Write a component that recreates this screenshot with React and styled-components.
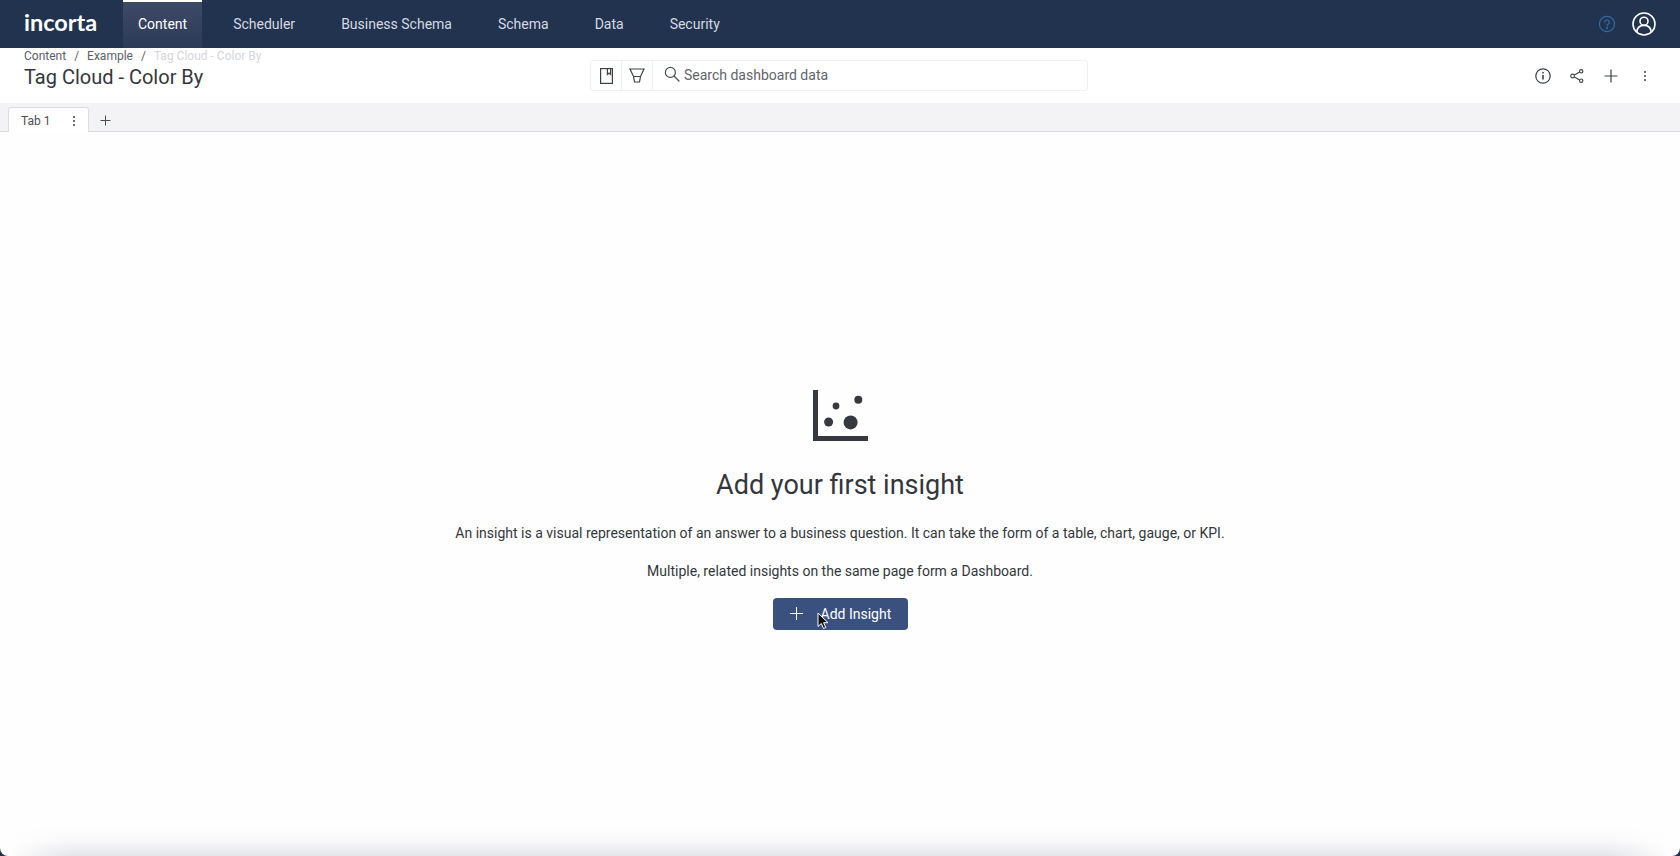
import styled, { createGlobalStyle } from 'styled-components';

const GlobalStyle = createGlobalStyle`
  html, body {
    margin: 0;
    padding: 0;
    background: #ffffff;
    font-family: Roboto, "Liberation Sans", sans-serif;
    overflow: hidden;
  }
`;

const NAV_ITEMS = ['Content', 'Scheduler', 'Business Schema', 'Schema', 'Data', 'Security'];

function App() {
  return (
    <>
      <GlobalStyle />
      <Page>
        <Nav>
          <Logo>incorta</Logo>
          <NavList>
            {NAV_ITEMS.map((item, i) => (
              <NavItem key={item} $active={i === 0}>
                {item}
              </NavItem>
            ))}
          </NavList>
          <NavRight>
            <svg width="18" height="18" viewBox="0 0 18 18" fill="none" stroke="#2f6c9f" strokeWidth="1.2">
              <circle cx="9" cy="9" r="7.6" />
              <path d="M6.7 7.2a2.3 2.3 0 1 1 3.6 1.9c-.8.5-1.3 1-1.3 2" strokeLinecap="round" />
              <circle cx="9" cy="13.1" r=".5" fill="#2f6c9f" />
            </svg>
            <svg width="24" height="24" viewBox="0 0 24 24" fill="none" stroke="#fff" strokeWidth="1.6">
              <circle cx="12" cy="12" r="11" />
              <circle cx="12" cy="9.2" r="4" />
              <path d="M4.8 20c.4-4 3-6.6 7.2-6.6s6.8 2.6 7.2 6.6" />
            </svg>
          </NavRight>
        </Nav>

        <Header>
          <TitleBlock>
            <Breadcrumb>
              <span>Content</span>
              <Sep>/</Sep>
              <span>Example</span>
              <Sep>/</Sep>
              <Current>Tag Cloud - Color By</Current>
            </Breadcrumb>
            <Title>Tag Cloud - Color By</Title>
          </TitleBlock>

          <SearchGroup>
            <SearchButton>
              <svg width="13" height="16" viewBox="0 0 13 16" fill="none" stroke="#3d4249" strokeWidth="1.2">
                <rect x=".6" y=".6" width="11.8" height="14.8" />
                <path d="M7.4 1v5.4l1.6-1.3 1.6 1.3V1" />
              </svg>
            </SearchButton>
            <SearchButton>
              <svg width="16" height="15" viewBox="0 0 16 15" fill="none" stroke="#3d4249" strokeWidth="1.2">
                <path d="M1 1h14l-3.5 7.5h-7z" />
                <path d="M4.5 8.5l1 5.5h5l1-5.5" />
              </svg>
            </SearchButton>
            <SearchField>
              <svg width="16" height="16" viewBox="0 0 16 16" fill="none" stroke="#4a4f57" strokeWidth="1.2">
                <circle cx="6.4" cy="6.4" r="5" />
                <path d="M10 10l5 5" strokeLinecap="round" />
              </svg>
              <span>Search dashboard data</span>
            </SearchField>
          </SearchGroup>

          <Actions>
            <ActionIcon>
              <svg width="16" height="16" viewBox="0 0 16 16" fill="none" stroke="#3d4249" strokeWidth="1.2">
                <circle cx="8" cy="8" r="7.2" />
                <path d="M8 7v4.6" strokeWidth="1.6" />
                <circle cx="8" cy="4.7" r=".9" fill="#3d4249" stroke="none" />
              </svg>
            </ActionIcon>
            <ActionIcon>
              <svg width="14" height="14" viewBox="0 0 14 14" fill="none" stroke="#3d4249" strokeWidth="1.1">
                <circle cx="2.6" cy="7" r="1.9" />
                <circle cx="11.2" cy="2.3" r="1.7" />
                <circle cx="11.2" cy="11.7" r="1.7" />
                <path d="M4.3 6.1l5.4-3M4.3 7.9l5.4 3" />
              </svg>
            </ActionIcon>
            <ActionIcon>
              <svg width="14" height="14" viewBox="0 0 14 14" stroke="#3d4249" strokeWidth="1.2">
                <path d="M7 .5v13M.5 7h13" />
              </svg>
            </ActionIcon>
            <ActionIcon>
              <Dots />
            </ActionIcon>
          </Actions>
        </Header>

        <TabBar>
          <Tab>
            <TabLabel>Tab 1</TabLabel>
            <Dots />
          </Tab>
          <AddTab>
            <svg width="11" height="11" viewBox="0 0 11 11" stroke="#4a4f57" strokeWidth="1">
              <path d="M5.5 .5v10M.5 5.5h10" />
            </svg>
          </AddTab>
        </TabBar>

        <Main>
          <svg width="55" height="51" viewBox="0 0 55 51" fill="#36393f">
            <rect x="0" y="0" width="5" height="51" />
            <rect x="0" y="46" width="55" height="5" />
            <circle cx="15.6" cy="32" r="4.5" />
            <circle cx="23" cy="16" r="3.4" />
            <circle cx="37.6" cy="32.4" r="7" />
            <circle cx="45.3" cy="9.7" r="4" />
          </svg>
          <Heading>Add your first insight</Heading>
          <Text>
            An insight is a visual representation of an answer to a business question. It can take the form of a table, chart, gauge, or KPI.
          </Text>
          <Text>Multiple, related insights on the same page form a Dashboard.</Text>
          <AddButton>
            <svg width="13" height="13" viewBox="0 0 13 13" stroke="#fff" strokeWidth="1">
              <path d="M6.5 0v13M0 6.5h13" />
            </svg>
            <span>Add Insight</span>
            <Cursor width="13" height="18" viewBox="0 0 13 18">
              <path d="M1 1v13.5l3.3-3 2.2 5 2.3-1-2.2-4.8h4.4z" fill="#111" stroke="#fff" strokeWidth="1" />
            </Cursor>
          </AddButton>
        </Main>
        <WindowEdge />
      </Page>
    </>
  );
}
export default App;

const Page = styled.div`
  width: 1680px;
  height: 856px;
  display: flex;
  flex-direction: column;
  position: relative;
  overflow: hidden;
  background: #fff;
`;

const Nav = styled.header`
  height: 48px;
  flex-shrink: 0;
  display: flex;
  align-items: stretch;
  background: #223350;
  padding: 0 24px 0 24px;
`;

const Logo = styled.div`
  width: 99px;
  align-self: center;
  font-family: Lato, sans-serif;
  font-size: 23.5px;
  font-weight: 700;
  color: #fff;
  line-height: 1;
  margin-top: -3px;
`;

const NavList = styled.nav`
  display: flex;
  gap: 16px;
`;

const NavItem = styled.div`
  display: flex;
  align-items: center;
  padding: 0 15px 3px;
  font-size: 14px;
  color: ${({ $active }) => ($active ? '#ffffff' : '#d5d9e0')};
  background: ${({ $active }) => ($active ? 'linear-gradient(#3d4a66, #2c3b58)' : 'transparent')};
  border-top: 2px solid ${({ $active }) => ($active ? '#ffffff' : 'transparent')};
`;

const NavRight = styled.div`
  margin-left: auto;
  display: flex;
  align-items: center;
  gap: 16px;
`;

const Header = styled.div`
  height: 55px;
  flex-shrink: 0;
  display: grid;
  grid-template-columns: 566px 498px 1fr;
  padding-left: 24px;
  background: #fff;
`;

const TitleBlock = styled.div`
  display: flex;
  flex-direction: column;
`;

const Breadcrumb = styled.div`
  display: flex;
  gap: 8px;
  font-size: 12px;
  line-height: 15px;
  margin-top: 1px;
  color: #5c6169;
`;

const Sep = styled.span`
  color: #5c6169;
`;

const Current = styled.span`
  color: #d3d6dc;
`;

const Title = styled.h1`
  margin: 0;
  font-size: 20px;
  font-weight: 400;
  line-height: 26px;
  color: #33373d;
`;

const SearchGroup = styled.div`
  display: flex;
  height: 31px;
  margin-top: 12px;
  border: 1px solid #f0f0f3;
  border-radius: 3px;
  box-sizing: border-box;
`;

const SearchButton = styled.div`
  width: 31px;
  box-sizing: border-box;
  display: flex;
  align-items: center;
  justify-content: center;
  border-right: 1px solid #f0f0f3;
`;

const SearchField = styled.div`
  display: flex;
  align-items: center;
  gap: 4px;
  padding: 0 11px 1px;
  font-size: 14px;
  color: #60656d;
  svg {
    margin-top: -2px;
  }
`;

const Actions = styled.div`
  display: flex;
  justify-content: flex-end;
  align-items: center;
  gap: 8px;
  padding-right: 22px;
  height: 55px;
`;

const ActionIcon = styled.div`
  width: 26px;
  display: flex;
  justify-content: center;
`;

const Dots = styled.span`
  display: block;
  width: 2px;
  height: 2px;
  background: #3d4249;
  box-shadow: 0 -4px 0 #3d4249, 0 4px 0 #3d4249;
  border-radius: 50%;
`;

const TabBar = styled.div`
  height: 29px;
  flex-shrink: 0;
  box-sizing: border-box;
  display: flex;
  align-items: flex-end;
  padding-left: 8px;
  background: #f3f3f5;
  border-bottom: 1px solid #d9dadd;
`;

const Tab = styled.div`
  width: 81px;
  height: 25px;
  margin-bottom: -1px;
  box-sizing: border-box;
  display: flex;
  align-items: center;
  justify-content: space-between;
  padding: 2px 13px 0 12px;
  background: #fff;
  border: 1px solid #dcdde0;
  border-bottom: none;
  border-radius: 3px 3px 0 0;
`;

const TabLabel = styled.span`
  font-size: 12px;
  color: #4a4f57;
`;

const AddTab = styled.div`
  width: 32px;
  height: 25px;
  padding-top: 4px;
  box-sizing: border-box;
  display: flex;
  align-items: center;
  justify-content: center;
`;

const Main = styled.main`
  flex: 1;
  display: flex;
  flex-direction: column;
  align-items: center;
  padding-top: 258px;
  background: #fefefe;
`;

const Heading = styled.h2`
  margin: 27px 0 0;
  font-size: 27px;
  font-weight: 400;
  line-height: 34px;
  color: #33373d;
`;

const Text = styled.p`
  margin: 23px 0 0;
  font-size: 14px;
  line-height: 16px;
  color: #33373d;
  & + & {
    margin-top: 22px;
  }
`;

const AddButton = styled.div`
  position: relative;
  width: 135px;
  height: 32px;
  margin-top: 19px;
  box-sizing: border-box;
  display: flex;
  align-items: center;
  gap: 18px;
  padding-left: 17px;
  background: #3a5180;
  border-radius: 4px;
  font-size: 14px;
  color: #fff;
  svg:first-child {
    margin-top: -2px;
  }
`;

const Cursor = styled.svg`
  position: absolute;
  left: 44px;
  top: 14px;
`;

const WindowEdge = styled.div`
  position: absolute;
  left: 0;
  right: 0;
  bottom: 0;
  height: 30px;
  border-radius: 0 0 8px 8px;
  box-shadow: 0 20px 0 20px #223350;
  pointer-events: none;
  overflow: hidden;
  &::before {
    content: '';
    position: absolute;
    inset: 0;
    background: linear-gradient(rgba(226, 227, 232, 0), rgba(226, 227, 232, 0.2) 50%, #e4e5e9);
    mask-image: linear-gradient(90deg, transparent 10px, #000 70px, #000 calc(100% - 70px), transparent calc(100% - 10px));
  }
`;
